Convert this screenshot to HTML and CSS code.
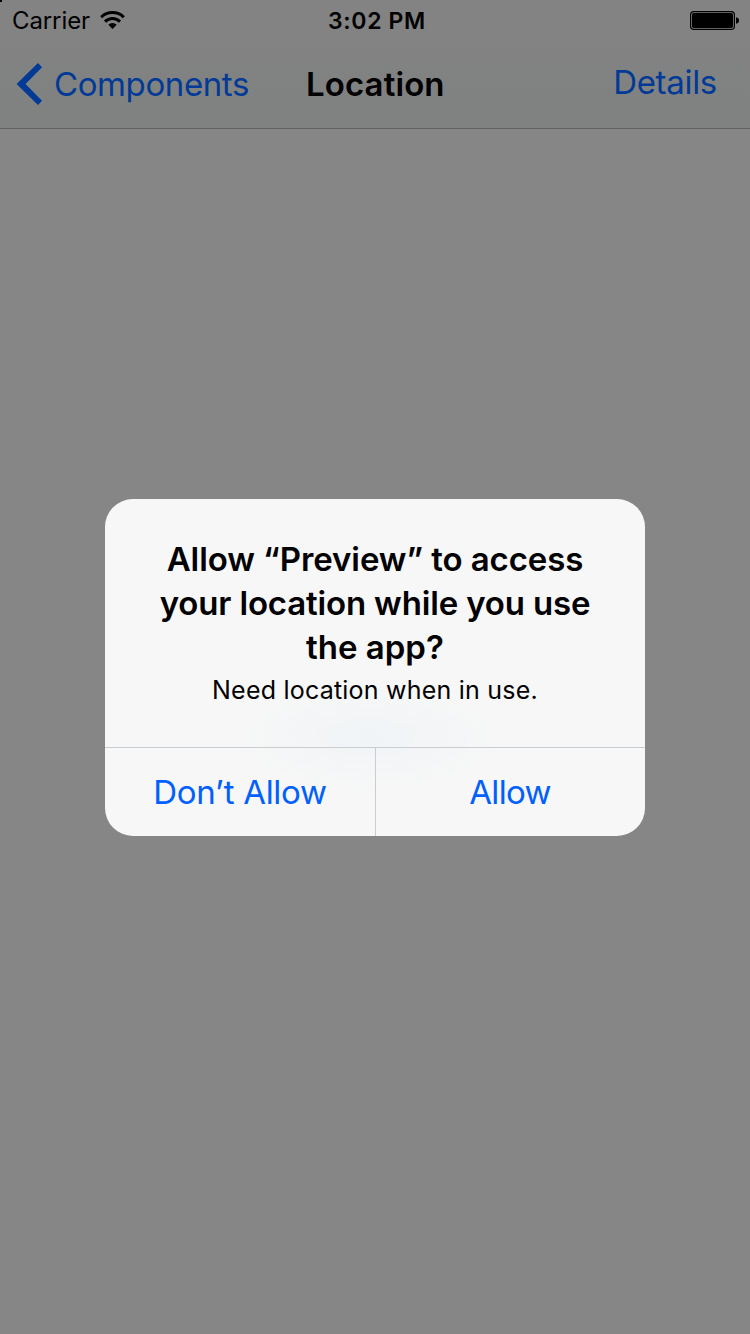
FILE: index.html
```html
<!DOCTYPE html>
<html lang="en">
<head>
<meta charset="utf-8">
<title>Location</title>
<link rel="stylesheet" href="styles.css">
</head>
<body>
<div class="screen">
  <header class="header">
    <div class="status">
      <div class="carrier"><span class="carrier-name">Carrier</span>
        <svg class="wifi" width="25" height="18" viewBox="0 0 25 18"><g fill="none" stroke="#000" stroke-width="3"><path d="M1.200 6.200a16.200 16.200 0 0 1 22.600 0"/><path d="M5 10.600a10.600 10.600 0 0 1 15 0"/></g><path d="M12.500 18l-4.200-4.200a6 6 0 0 1 8.400 0z"/></svg>
      </div>
      <span class="time">3:02 PM</span>
      <svg class="battery" width="49" height="19" viewBox="0 0 49 19"><rect x=".6" y=".6" width="43.800" height="17.800" rx="3.200" fill="none" stroke="#000" stroke-width="1.200"/><rect x="2" y="2" width="41" height="15" rx="1.800"/><path d="M46 6.300q3 .5 3 3.200t-3 3.200z"/></svg>
    </div>
    <nav class="nav">
      <a class="back"><svg class="chevron" width="26" height="42" viewBox="0 0 26 42"><path d="M22 0L26 4.200L9.500 21L26 37.800L22 42L.6 21z" fill="currentColor"/></svg><span class="back-label">Components</span></a>
      <h1 class="title">Location</h1>
      <a class="details">Details</a>
    </nav>
  </header>
  <main class="content">
    <section class="alert">
      <div class="message">
        <h2 class="alert-title"><span class="l1">Allow “Preview” to access</span><span class="l2">your location while you use</span><span class="l3">the app?</span></h2>
        <p class="alert-text">Need location when in use.</p>
      </div>
      <div class="actions"><button class="action deny">Don’t Allow</button><button class="action allow">Allow</button></div>
    </section>
  </main>
</div>
</body>
</html>
```
FILE: styles.css
```css
* { box-sizing: border-box; }
body { margin: 0; font-family: Inter, sans-serif; color: #000; }
.screen { width: 750px; height: 1334px; display: flex; flex-direction: column; background: #868686; overflow: hidden; }
.header { height: 129px; background: linear-gradient(#000, #000) 0 0 / 2px 2px no-repeat, linear-gradient(#838383, #7f8280); border-bottom: 1px solid #606161; }
.status { height: 40px; display: grid; grid-template-columns: 1fr auto 1fr; align-items: center; padding: 1px 11px 0 12px; }
.carrier { display: flex; align-items: center; gap: 10px; font-size: 24px; letter-spacing: -0.1px; margin-top: -1px; }
.time { font-size: 23px; font-weight: 600; letter-spacing: 0.65px; padding-left: 3px; }
.battery { justify-self: end; }
.nav { height: 88px; display: grid; grid-template-columns: 290px auto 1fr; align-items: center; padding: 0 33px 0 16px; }
.back, .details { color: #003a96; font-size: 33px; }
.back { display: flex; align-items: center; gap: 12px; letter-spacing: -0.4px; }
.details { justify-self: end; letter-spacing: -0.3px; padding-bottom: 4px; }
.title { margin: 0; font-size: 33px; font-weight: 600; letter-spacing: 0.1px; }
.content { flex: 1; padding: 370px 105px 0; }
.alert { width: 540px; height: 337px; border-radius: 28px; overflow: hidden; background: radial-gradient(ellipse 140px 55px at 265px 238px, #f0f4f6, #f7f7f7); display: flex; flex-direction: column; }
.message { height: 248px; padding-top: 38px; text-align: center; }
.alert-title { margin: 0; font-size: 33px; line-height: 44px; font-weight: 600; }
.alert-title span { display: block; white-space: nowrap; }
.l1 { letter-spacing: -0.08px; }
.l2 { letter-spacing: -0.16px; }
.alert-text { margin: 0; font-size: 25px; line-height: 42px; letter-spacing: 0.22px; }
.actions { flex: 1; display: grid; grid-template-columns: 271px 1fr; border-top: 1px solid #c9cdcf; }
.action { border: 0; padding: 0; background: transparent; color: #0060ff; font: 400 33px Inter, sans-serif; letter-spacing: -0.3px; }
.deny { border-right: 1px solid #cbcccc; }
.allow { letter-spacing: -0.7px; padding-right: 1px; }
```
